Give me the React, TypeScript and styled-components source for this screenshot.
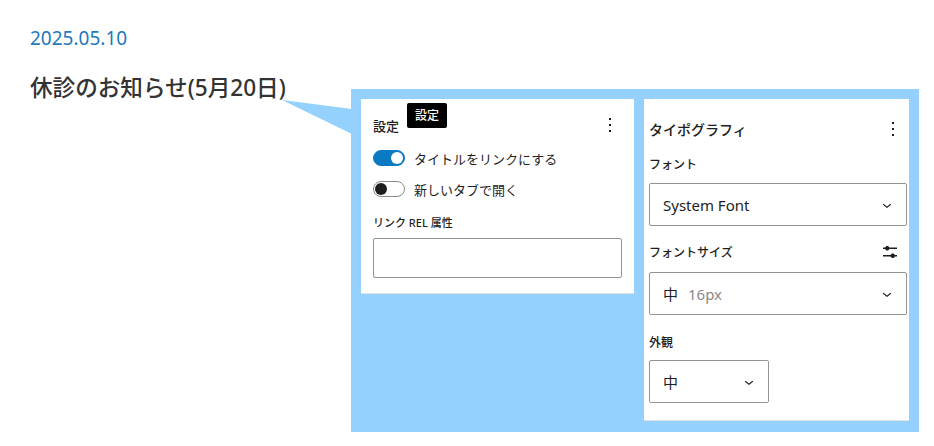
import React from "react";
import styled, { createGlobalStyle } from "styled-components";

const GlobalStyle = createGlobalStyle`
  html, body { margin: 0; padding: 0; background: #ffffff; }
  body {
    font-family: "Noto Sans", "Noto Sans CJK JP", sans-serif;
    color: #1e1e1e;
  }
  * { box-sizing: border-box; }
`;

const Page = styled.div`
  width: 934px;
  height: 446px;
  padding: 26px 0 0 30px;
  overflow: hidden;
`;

const DateText = styled.div`
  font-size: 19px;
  line-height: 24px;
  color: #2378be;
`;

const Row = styled.div`
  position: relative;
  display: grid;
  grid-template-columns: 321px 568px;
  align-items: start;
  margin-top: 23px;
`;

const Title = styled.h1`
  margin: 0;
  font-size: 22.6px;
  line-height: 30px;
  font-weight: 500;
  color: #333333;
  white-space: nowrap;
`;

const Pointer = styled.svg`
  position: absolute;
  left: 0;
  top: 0;
  width: 330px;
  height: 70px;
  pointer-events: none;
`;

const Stage = styled.div`
  margin-top: 16px;
  height: 343px;
  padding: 10px;
  background: #94d1fe;
  display: flex;
  align-items: flex-start;
  gap: 10px;
`;

const Panel = styled.div<{ $w: number; $pad: string }>`
  width: ${(p) => p.$w}px;
  padding: ${(p) => p.$pad};
  background: #ffffff;
  border-bottom: 1px solid #e0e0e0;
  display: flex;
  flex-direction: column;
`;

const Header = styled.div<{ $size: number; $mr?: number }>`
  position: relative;
  height: 28px;
  display: flex;
  align-items: center;
  justify-content: space-between;
  font-size: ${(p) => p.$size}px;
  font-weight: 500;
  margin-right: ${(p) => p.$mr ?? 0}px;
`;

const Tooltip = styled.div`
  position: absolute;
  left: 34px;
  top: -8px;
  height: 25px;
  padding: 0 8px;
  background: #000000;
  color: #ffffff;
  border-radius: 2px;
  font-size: 12px;
  line-height: 25px;
`;

const IconBox = styled.span`
  display: inline-flex;
  width: 24px;
  height: 24px;
  color: #1e1e1e;
`;

const ToggleRow = styled.div<{ $mt: number }>`
  display: flex;
  align-items: center;
  gap: 9px;
  height: 16px;
  margin-top: ${(p) => p.$mt}px;
  font-size: 13px;
`;

const Track = styled.span<{ $on: boolean }>`
  position: relative;
  width: 32px;
  height: 16px;
  border-radius: 8px;
  background: ${(p) => (p.$on ? "#0a7bc2" : "#ffffff")};
  border: 1px solid ${(p) => (p.$on ? "#0a7bc2" : "#8a8a8a")};
  flex: none;
`;

const Thumb = styled.span<{ $on: boolean }>`
  position: absolute;
  top: 1px;
  left: ${(p) => (p.$on ? "17px" : "1px")};
  width: 12px;
  height: 12px;
  border-radius: 50%;
  background: ${(p) => (p.$on ? "#ffffff" : "#1e1e1e")};
`;

const FieldLabel = styled.div<{ $size: number; $mt: number }>`
  font-size: ${(p) => p.$size}px;
  font-weight: 500;
  line-height: 16px;
  margin-top: ${(p) => p.$mt}px;
`;

const LabelRow = styled.div`
  display: flex;
  align-items: center;
  justify-content: space-between;
  height: 24px;
  margin-top: 14px;
  margin-right: 5px;
  font-size: 12px;
  font-weight: 500;
`;

const TextInput = styled.div`
  margin-top: 7px;
  height: 40px;
  border: 1px solid #949494;
  border-radius: 2px;
`;

const Select = styled.div<{ $w?: number; $mt: number }>`
  width: ${(p) => (p.$w ? `${p.$w}px` : "100%")};
  height: 43px;
  margin-top: ${(p) => p.$mt}px;
  border: 1px solid #949494;
  border-radius: 2px;
  display: flex;
  align-items: center;
  justify-content: space-between;
  padding: 0 10px 0 13px;
  font-size: 15px;
  color: #1e1e1e;
`;

const Hint = styled.span`
  color: #8a8a8a;
  margin-left: 10px;
`;

const MoreVertical = () => (
  <IconBox>
    <svg viewBox="0 0 24 24" width="24" height="24" fill="currentColor">
      <path d="M13 19h-2v-2h2v2zm0-6h-2v-2h2v2zm0-6h-2V5h2v2z" />
    </svg>
  </IconBox>
);

const Settings = () => (
  <IconBox>
    <svg viewBox="0 0 24 24" width="24" height="24" fill="currentColor">
      <path d="m19 7.5h-7.628c-.3089-.87389-1.1423-1.5-2.122-1.5-.97966 0-1.81309.62611-2.12197 1.5h-2.12803v1.5h2.12803c.30888.87389 1.14231 1.5 2.12197 1.5.9797 0 1.8131-.62611 2.122-1.5h7.628z" />
      <path d="m19 15h-2.128c-.3089-.8739-1.1423-1.5-2.122-1.5s-1.8131.6261-2.122 1.5h-7.628v1.5h7.628c.3089.8739 1.1423 1.5 2.122 1.5s1.8131-.6261 2.122-1.5h2.128z" />
    </svg>
  </IconBox>
);

const Chevron = () => (
  <svg viewBox="0 0 24 24" width="18" height="18" fill="#1e1e1e">
    <path d="M17.5 11.6L12 16l-5.5-4.4.9-1.2L12 14l4.6-3.6 1 1.2z" />
  </svg>
);

const Toggle = ({ on, label, mt }: { on: boolean; label: string; mt: number }) => (
  <ToggleRow $mt={mt}>
    <Track $on={on}>
      <Thumb $on={on} />
    </Track>
    <span>{label}</span>
  </ToggleRow>
);

export default function App() {
  return (
    <>
      <GlobalStyle />
      <Page>
        <DateText>2025.05.10</DateText>
        <Row>
          <Title>休診のお知らせ(5月20日)</Title>
          <Stage>
            <Panel $w={273} $pad="12px 12px 15px 12px">
              <Header $size={13}>
                <span>設定</span>
                <Tooltip>設定</Tooltip>
                <MoreVertical />
              </Header>
              <Toggle on={true} label="タイトルをリンクにする" mt={11} />
              <Toggle on={false} label="新しいタブで開く" mt={15} />
              <FieldLabel $size={11} $mt={18}>
                リンク REL 属性
              </FieldLabel>
              <TextInput />
            </Panel>
            <Panel $w={265} $pad="16px 2px 17px 5px">
              <Header $size={14} $mr={2}>
                <span>タイポグラフィ</span>
                <MoreVertical />
              </Header>
              <FieldLabel $size={12} $mt={14}>
                フォント
              </FieldLabel>
              <Select $mt={10}>
                <span>System Font</span>
                <Chevron />
              </Select>
              <LabelRow>
                <span>フォントサイズ</span>
                <Settings />
              </LabelRow>
              <Select $mt={8}>
                <span>
                  中<Hint>16px</Hint>
                </span>
                <Chevron />
              </Select>
              <FieldLabel $size={12} $mt={20}>
                外観
              </FieldLabel>
              <Select $w={120} $mt={9}>
                <span>中</span>
                <Chevron />
              </Select>
            </Panel>
          </Stage>
          <Pointer viewBox="0 0 330 70">
            <polygon points="252,27 322,36 322,61" fill="#94d1fe" />
          </Pointer>
        </Row>
      </Page>
    </>
  );
}
